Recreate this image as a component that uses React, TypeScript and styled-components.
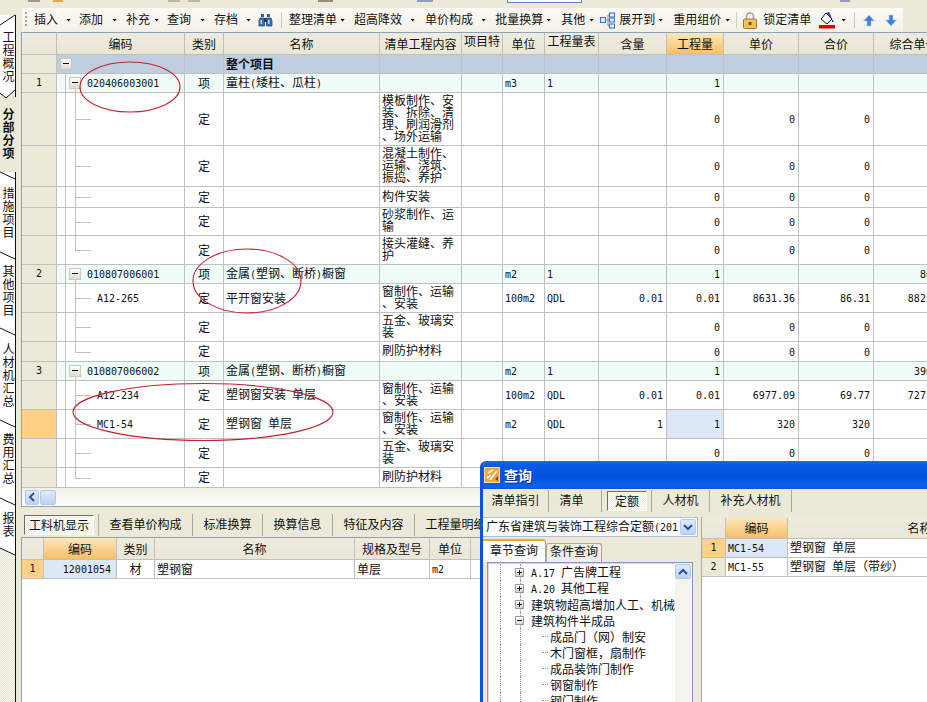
import React from 'react';
import styled, { createGlobalStyle } from 'styled-components';

const GlobalStyle = createGlobalStyle`
  html, body { margin: 0; padding: 0; background: #ece9d8; }
  body { font-family: "Noto Sans CJK SC", "Liberation Sans", sans-serif; font-size: 12px; color: #111; }
`;

const Page = styled.div`
  position: relative;
  width: 927px;
  height: 702px;
  overflow: hidden;
  display: flex;
  background: #ece9d8;
`;

/* ---------- left vertical tabs ---------- */
const Sidebar = styled.nav`
  width: 16px;
  flex: none;
  padding-top: 15px;
  display: flex;
  flex-direction: column;
`;
const SideTab = styled.div<{ $h: number; $pt: number; $active?: boolean }>`
  position: relative;
  box-sizing: border-box;
  height: ${p => p.$h}px;
  padding-top: ${p => p.$pt}px;
  background: ${p => (p.$active ? '#ece9d8' : '#fff')};
  border-right: 1px solid ${p => (p.$active ? '#ece9d8' : '#111')};
  writing-mode: vertical-rl;
  text-orientation: upright;
  font-size: 12px;
  line-height: 13px;
  letter-spacing: 1px;
  font-weight: ${p => (p.$active ? 700 : 400)};
`;
const Notch = styled.svg`
  position: absolute;
  left: 0;
  top: 0;
  width: 16px;
  height: 14px;
  overflow: visible;
`;
const SideTail = styled.div`
  flex: 1;
  position: relative;
  background: repeating-conic-gradient(#e6e3d2 0 25%, #f8f7f0 0 50%) 0 0 / 2px 2px;
  border-right: 1px solid #111;
`;

/* ---------- main column ---------- */
const Main = styled.main`
  flex: 1;
  min-width: 0;
  padding-left: 5px;
  display: flex;
  flex-direction: column;
`;
const TopStrip = styled.div`
  height: 8px;
  display: flex;
  align-items: flex-start;
  background: #ece9d8;
`;
const StripBit = styled.span<{ $ml: number; $w: number; $c: string; $box?: boolean }>`
  margin-left: ${p => p.$ml}px;
  width: ${p => p.$w}px;
  height: ${p => (p.$box ? 3 : 2)}px;
  box-sizing: border-box;
  background: ${p => p.$c};
  border: ${p => (p.$box ? '1px solid #5f86bd' : 'none')};
  border-top: none;
`;
const Toolbar = styled.div`
  height: 24px;
  width: 881px;
  margin-left: 1px;
  flex: none;
  display: flex;
  align-items: center;
  background: linear-gradient(#fbfaf6, #f3f1e6);
`;
const Grip = styled.span<{ $ml: number }>`
  margin-left: ${p => p.$ml}px;
  width: 2px;
  height: 16px;
  background: repeating-linear-gradient(#a9a794 0 2px, transparent 2px 4px);
`;
const ToolText = styled.span<{ $ml: number }>`
  margin-left: ${p => p.$ml}px;
  padding-bottom: 4px;
  font-size: 12px;
  white-space: nowrap;
`;
const Caret = styled.span<{ $ml: number }>`
  margin-left: ${p => p.$ml}px;
  width: 5px;
  height: 3px;
  flex: none;
  background: #111;
  clip-path: polygon(0 0, 100% 0, 50% 100%);
`;
const ToolSep = styled.span<{ $ml: number }>`
  margin-left: ${p => p.$ml}px;
  width: 1px;
  height: 16px;
  background: #cfccb8;
`;
const IconSlot = styled.svg<{ $ml: number }>`
  margin-left: ${p => p.$ml}px;
  flex: none;
`;

/* ---------- grids ---------- */
const UpperPanel = styled.section`
  height: 475px;
  box-sizing: border-box;
  flex: none;
  border-left: 1px solid #8ea3b4;
  border-top: 1px solid #8ea3b4;
  border-bottom: 1px solid #8ea3b4;
  overflow: hidden;
  display: flex;
  flex-direction: column;
  background: #fff;
`;
const TableClip = styled.div`
  height: 455px;
  flex: none;
  overflow: hidden;
`;
const Table = styled.table<{ $w: number }>`
  border-collapse: separate;
  border-spacing: 0;
  table-layout: fixed;
  width: ${p => p.$w}px;
`;
const Row = styled.tr<{ $h: number }>`
  height: ${p => p.$h}px;
`;
const Head = styled.th<{ $hot?: boolean; $raise?: boolean }>`
  box-sizing: border-box;
  padding: 0 0 ${p => (p.$raise ? 7 : 1)}px;
  font-weight: 400;
  font-size: 12px;
  line-height: 13px;
  white-space: nowrap;
  overflow: hidden;
  text-align: center;
  border-right: 1px solid #c0c0c0;
  border-bottom: 1px solid #c0c0c0;
  background: ${p => (p.$hot ? 'linear-gradient(#fde7bb, #f6bf66)' : 'linear-gradient(#efecdf, #e9e6d6)')};
`;
type Tone = 'group' | 'parent' | 'plain';
const toneBg: Record<Tone, string> = { group: '#bfcde0', parent: '#effcf7', plain: '#fff' };
const Cell = styled.td<{ $tone?: Tone; $align?: string; $pick?: boolean; $pl?: number; $pr?: number }>`
  box-sizing: border-box;
  position: relative;
  padding: 0 ${p => p.$pr ?? 3}px 2px ${p => p.$pl ?? 2}px;
  font-size: 12px;
  line-height: 13px;
  white-space: nowrap;
  overflow: hidden;
  text-align: ${p => p.$align ?? 'left'};
  border-right: 1px solid #c0c0c0;
  border-bottom: 1px solid #c0c0c0;
  background: ${p => (p.$pick ? '#dde8f6' : toneBg[p.$tone ?? 'plain'])};
`;
const Wrapped = styled(Cell)`
  white-space: normal;
  padding: 0 7px 3px 2px;
  line-height: 12px;
  word-break: break-all;
  line-break: anywhere;
`;
const RowHead = styled.td<{ $pick?: boolean }>`
  box-sizing: border-box;
  padding-bottom: 2px;
  text-align: center;
  font-size: 10px;
  line-height: 13px;
  font-family: "DejaVu Sans Mono", monospace;
  border-right: 1px solid #c0c0c0;
  border-bottom: 1px solid #c0c0c0;
  background: ${p => (p.$pick ? '#ffd085' : '#ece9d8')};
`;
const Mono = styled.span`
  font-family: "DejaVu Sans Mono", "Liberation Mono", monospace;
  font-size: 10px;
  line-height: 10px;
  white-space: pre;
`;
const Expander = styled.span<{ $left: number }>`
  position: absolute;
  left: ${p => p.$left}px;
  top: 50%;
  margin-top: -6px;
  width: 12px;
  height: 12px;
  box-sizing: border-box;
  border: 1px solid #c9c9c0;
  background: linear-gradient(#fdfdfb, #dedcd0);
  &::after {
    content: '';
    position: absolute;
    left: 2px;
    right: 2px;
    top: 4px;
    height: 1px;
    background: #111;
  }
`;
const Guide = styled.span<{ $left: number; $top?: string; $bottom?: string }>`
  position: absolute;
  left: ${p => p.$left}px;
  top: ${p => p.$top ?? '0'};
  bottom: ${p => p.$bottom ?? '0'};
  width: 1px;
  background: #c0c0c0;
`;
const Stub = styled.span`
  position: absolute;
  left: 18px;
  top: 50%;
  width: 16px;
  height: 1px;
  background: #c0c0c0;
`;

const ScrollBar = styled.div`
  flex: 1;
  display: flex;
  align-items: center;
  gap: 1px;
  padding-left: 3px;
  background: linear-gradient(#f3f1e7, #fdfdfb);
`;
const ScrollBtn = styled.span<{ $w: number }>`
  width: ${p => p.$w}px;
  height: 15px;
  box-sizing: border-box;
  display: flex;
  align-items: center;
  justify-content: center;
  border: 1px solid #b5c9ee;
  border-radius: 2px;
  background: linear-gradient(#dfe9fb, #bfd1f4);
`;

/* ---------- tab strips ---------- */
const LowerTabs = styled.div`
  height: 30px;
  box-sizing: border-box;
  flex: none;
  display: flex;
  align-items: center;
  padding: 6px 0 0 3px;
`;
const StripTab = styled.span<{ $w: number; $pr?: number }>`
  width: ${p => p.$w}px;
  height: 22px;
  box-sizing: border-box;
  flex: none;
  display: flex;
  align-items: center;
  justify-content: center;
  padding: 0 ${p => p.$pr ?? 0}px 3px 0;
  font-size: 12px;
  line-height: 13px;
  white-space: nowrap;
  border-right: 1px solid #aca899;
`;
const ActiveTab = styled.span<{ $w: number; $ml?: number }>`
  width: ${p => p.$w}px;
  height: 20px;
  margin-left: ${p => p.$ml ?? 0}px;
  margin-right: 4px;
  box-sizing: border-box;
  flex: none;
  display: flex;
  align-items: center;
  justify-content: center;
  padding-bottom: 2px;
  font-size: 12px;
  line-height: 13px;
  white-space: nowrap;
  border-top: 1px solid #716f64;
  border-left: 1px solid #716f64;
  border-right: 1px solid #fff;
  border-bottom: 1px solid #fff;
  background: repeating-conic-gradient(#f0eee2 0 25%, #fcfbf7 0 50%) 0 0 / 2px 2px;
`;
const TabSep = styled.span`
  width: 1px;
  height: 22px;
  flex: none;
  background: #aca899;
`;
const LowerPanel = styled.section`
  flex: 1;
  min-height: 0;
  border-left: 1px solid #8ea3b4;
  border-top: 1px solid #8ea3b4;
  overflow: hidden;
  background: #fff;
`;

/* ---------- floating query window ---------- */
const QueryWindow = styled.aside`
  position: absolute;
  left: 480px;
  top: 461px;
  right: 0;
  bottom: 0;
  box-sizing: border-box;
  border-left: 3px solid #0a55dc;
  border-top-left-radius: 6px;
  overflow: hidden;
  background: #ece9d8;
  display: flex;
  flex-direction: column;
`;
const TitleBar = styled.header`
  height: 28px;
  flex: none;
  margin-left: -3px;
  padding: 0 0 1px 4px;
  box-sizing: border-box;
  display: flex;
  align-items: center;
  gap: 4px;
  color: #fff;
  font-weight: 700;
  font-size: 14px;
  line-height: 14px;
  text-shadow: 1px 1px 0 #0a2f9c;
  background: linear-gradient(#0b6cf2 0, #0a5be6 15%, #0350dc 55%, #0a62ee 90%, #0a55d8 100%);
`;
const QueryTabs = styled.div`
  height: 24px;
  flex: none;
  display: flex;
  align-items: center;
`;
const QueryBody = styled.div`
  flex: 1;
  min-height: 0;
  padding-top: 4px;
  display: grid;
  grid-template-columns: 218px 1fr;
`;
const LeftPane = styled.div`
  display: flex;
  flex-direction: column;
  min-width: 0;
`;
const Combo = styled.div`
  height: 20px;
  flex: none;
  margin-left: -1px;
  width: 216px;
  box-sizing: border-box;
  display: flex;
  align-items: center;
  padding-left: 3px;
  border: 1px solid #aebfd6;
  background: #fff;
  overflow: hidden;
`;
const ComboText = styled.span`
  flex: 1;
  min-width: 0;
  padding-bottom: 2px;
  white-space: nowrap;
  overflow: hidden;
  font-size: 12px;
  line-height: 13px;
`;
const ComboBtn = styled(ScrollBtn)`
  flex: none;
  height: 16px;
  margin-right: 1px;
`;
const SubTabs = styled.div`
  height: 25px;
  flex: none;
  display: flex;
  align-items: flex-end;
  margin-left: -1px;
`;
const SubTab = styled.span<{ $active?: boolean; $w: number }>`
  width: ${p => p.$w}px;
  height: ${p => (p.$active ? 23 : 19)}px;
  box-sizing: border-box;
  display: flex;
  align-items: center;
  justify-content: center;
  padding-bottom: 5px;
  font-size: 12px;
  line-height: 13px;
  border: 1px solid #aca899;
  border-bottom: none;
  border-top: ${p => (p.$active ? '2px solid #f0a92e' : '1px solid #aca899')};
  border-radius: 3px 3px 0 0;
  background: ${p => (p.$active ? '#fdfdfa' : '#f1efe4')};
`;
const TreePanel = styled.div`
  flex: 1;
  min-height: 0;
  margin-left: 4px;
  width: 206px;
  box-sizing: border-box;
  border: 1px solid #7f9db9;
  border-bottom: none;
  box-shadow: inset 1px 1px 0 #dcd9c8;
  background: #fff;
  display: flex;
  overflow: hidden;
`;
const TreeList = styled.ul`
  flex: 1;
  min-width: 0;
  margin: 0;
  padding: 1px 0 0;
  list-style: none;
  overflow: hidden;
`;
const TreeRow = styled.li<{ $child?: boolean }>`
  position: relative;
  height: 16px;
  display: flex;
  align-items: center;
  padding-left: ${p => (p.$child ? 62 : 27)}px;
  font-size: 12px;
  line-height: 13px;
  white-space: nowrap;
  &::before {
    content: '';
    position: absolute;
    left: 12px;
    top: 0;
    bottom: 0;
    border-left: 1px dotted #999;
  }
`;
const TreeBox = styled.span`
  position: relative;
  width: 9px;
  height: 9px;
  margin-right: 7px;
  flex: none;
  box-sizing: border-box;
  border: 1px solid #9a9a9a;
  background: linear-gradient(#fff, #d8d6ca);
`;
const TreeGlyph = styled.svg`
  position: absolute;
  left: 0;
  top: 0;
`;
const ChildGuide = styled.span`
  position: absolute;
  left: 32px;
  top: 0;
  bottom: 0;
  border-left: 1px dotted #999;
`;
const ChildStub = styled.span`
  position: absolute;
  left: 54px;
  top: 8px;
  width: 6px;
  border-top: 1px dotted #999;
`;
const TreeTrack = styled.div`
  width: 17px;
  flex: none;
  padding-top: 1px;
  background: #f5f4ea;
`;
const RightPane = styled.div`
  border-left: 1px solid #aca899;
  overflow: hidden;
  background: #fff;
  padding-top: 1px;
  box-shadow: inset 0 1px 0 #ece9d8;
`;

/* ---------- hand-drawn annotations ---------- */
const Annotations = styled.svg`
  position: absolute;
  left: 0;
  top: 0;
  width: 927px;
  height: 702px;
  pointer-events: none;
`;

/* ---------- icons ---------- */
const Binoculars = ({ ml }: { ml: number }) => (
  <IconSlot $ml={ml} width="15" height="15" viewBox="0 0 15 15">
    <path d="M3 1h3v3H3zM9 1h3v3H9z" fill="#2f5f9e" />
    <path d="M2 5h4.500v8H1V8zM8.500 5H13l1 3v5H8.500z" fill="#3a72b8" stroke="#1e3f72" strokeWidth=".7" />
    <path d="M6 5h3v4H6z" fill="#1e3f72" />
    <path d="M2.500 7h1.500v4H2.500zM10 7h1.500v4H10z" fill="#bcd6f2" />
  </IconSlot>
);
const TreeIcon = ({ ml }: { ml: number }) => (
  <IconSlot $ml={ml} width="15" height="17" viewBox="0 0 15 17">
    <path d="M5 8h3M8 3v11M8 3h2M8 8h2M8 14h2" stroke="#6f8fc0" fill="none" />
    <rect x=".5" y="5.500" width="5" height="5" fill="#dfeafa" stroke="#3f6fb8" />
    <rect x="9.500" y="1" width="5" height="4" fill="#dfeafa" stroke="#3f6fb8" />
    <rect x="9.500" y="6" width="5" height="4" fill="#dfeafa" stroke="#3f6fb8" />
    <rect x="9.500" y="12" width="5" height="4" fill="#dfeafa" stroke="#3f6fb8" />
  </IconSlot>
);
const Lock = ({ ml }: { ml: number }) => (
  <IconSlot $ml={ml} width="14" height="17" viewBox="0 0 14 17">
    <path d="M3.500 7V4.500a3.500 3.500 0 0 1 7 0V7" fill="none" stroke="#a8a392" strokeWidth="1.600" />
    <rect x=".5" y="7" width="13" height="9.500" rx="1" fill="#f0c25a" stroke="#a8782a" />
    <rect x="5.500" y="10" width="3" height="3" fill="#6b4a12" />
  </IconSlot>
);
const Paint = ({ ml }: { ml: number }) => (
  <IconSlot $ml={ml} width="16" height="17" viewBox="0 0 16 17">
    <path d="M7 1l6 6-5 5-6-5z" fill="#fff" stroke="#111" />
    <path d="M7 1l3-1 3 6z" fill="#1e3f9e" />
    <path d="M13 7l2 3-2 0z" fill="#1e3f9e" />
    <rect x="0" y="13" width="16" height="3.500" fill="#e00000" />
  </IconSlot>
);
const Arrow = ({ ml, down }: { ml: number; down?: boolean }) => (
  <IconSlot $ml={ml} width="12" height="13" viewBox="0 0 12 13">
    <path
      d={down ? 'M4 1h4v5h3.500L6 12 .5 6H4z' : 'M4 12h4V7h3.500L6 1 .5 7H4z'}
      fill="#3f80d8"
      stroke="#b9d2f2"
      strokeWidth=".6"
    />
  </IconSlot>
);
const Chevron = ({ dir, color = '#2a4fa8' }: { dir: 'left' | 'up' | 'down'; color?: string }) => {
  const d = { left: 'M7 1L3 5l4 4', up: 'M1 7l4-4 4 4', down: 'M1 3l4 4 4-4' }[dir];
  return (
    <svg width="10" height="10" viewBox="0 0 10 10">
      <path d={d} fill="none" stroke={color} strokeWidth="2" />
    </svg>
  );
};
const WindowIcon = () => (
  <svg width="16" height="16" viewBox="0 0 16 16">
    <rect x=".5" y=".5" width="15" height="15" fill="#f0a63a" stroke="#f7dca8" />
    <path d="M3 11l4-3M4 6l5-3M6 13l7-9" stroke="#fff" strokeWidth="1.800" fill="none" />
    <path d="M11 12l3-3v5z" fill="#7a4a10" />
  </svg>
);

/* ---------- data ---------- */
const upperCols = [35, 128, 39, 156, 82, 41, 42, 54, 68, 57, 75, 75, 80];
const upperHeads = ['', '编码', '类别', '名称', '清单工程内容', '项目特', '单位', '工程量表', '含量', '工程量', '单价', '合价', '综合单价'];

type Kind = 'group' | 'parent' | 'child' | 'last';
interface RowData {
  h: number;
  kind: Kind;
  no?: string;
  code?: string;
  type?: string;
  name?: string;
  content?: string;
  unit?: string;
  expr?: string;
  rate?: string;
  qty?: string;
  price?: string;
  total?: string;
  sum?: string;
  selected?: boolean;
}
const WINDOW_TEXT = '窗制作、运输、安装';
const rows: RowData[] = [
  { h: 19, kind: 'group', name: '整个项目' },
  { h: 19, kind: 'parent', no: '1', code: '020406003001', type: '项', name: '童柱(矮柱、瓜柱)', unit: 'm3', expr: '1', qty: '1' },
  { h: 53, kind: 'child', type: '定', content: '模板制作、安装、拆除、清理、刷润滑剂、场外运输', qty: '0', price: '0', total: '0' },
  { h: 41, kind: 'child', type: '定', content: '混凝土制作、运输、浇筑、振捣、养护', qty: '0', price: '0', total: '0' },
  { h: 21, kind: 'child', type: '定', content: '构件安装', qty: '0', price: '0', total: '0' },
  { h: 28, kind: 'child', type: '定', content: '砂浆制作、运输', qty: '0', price: '0', total: '0' },
  { h: 29, kind: 'last', type: '定', content: '接头灌缝、养护', qty: '0', price: '0', total: '0' },
  { h: 19, kind: 'parent', no: '2', code: '010807006001', type: '项', name: '金属(塑钢、断桥)橱窗', unit: 'm2', expr: '1', qty: '1', sum: '86.31' },
  { h: 29, kind: 'child', code: 'A12-265', type: '定', name: '平开窗安装', content: WINDOW_TEXT, unit: '100m2', expr: 'QDL', rate: '0.01', qty: '0.01', price: '8631.36', total: '86.31', sum: '8821.36' },
  { h: 29, kind: 'child', type: '定', content: '五金、玻璃安装', qty: '0', price: '0', total: '0' },
  { h: 20, kind: 'last', type: '定', content: '刷防护材料', qty: '0', price: '0', total: '0' },
  { h: 19, kind: 'parent', no: '3', code: '010807006002', type: '项', name: '金属(塑钢、断桥)橱窗', unit: 'm2', expr: '1', qty: '1', sum: '390.85' },
  { h: 29, kind: 'child', code: 'A12-234', type: '定', name: '塑钢窗安装 单层', content: WINDOW_TEXT, unit: '100m2', expr: 'QDL', rate: '0.01', qty: '0.01', price: '6977.09', total: '69.77', sum: '7271.09' },
  { h: 29, kind: 'child', code: 'MC1-54', type: '定', name: '塑钢窗 单层', content: WINDOW_TEXT, unit: 'm2', expr: 'QDL', rate: '1', qty: '1', price: '320', total: '320', selected: true },
  { h: 29, kind: 'child', type: '定', content: '五金、玻璃安装', qty: '0', price: '0', total: '0' },
  { h: 20, kind: 'last', type: '定', content: '刷防护材料', qty: '0', price: '0', total: '0' },
];

const sideTabs = [
  { label: '工程概况', h: 82, pt: 16, first: true },
  { label: '分部分项', h: 75, pt: 11, active: true },
  { label: '措施项目', h: 80, pt: 15 },
  { label: '其他项目', h: 76, pt: 13 },
  { label: '人材机汇总', h: 92, pt: 15 },
  { label: '费用汇总', h: 78, pt: 13 },
  { label: '报表', h: 50, pt: 14 },
];

const lowerCols = [22, 73, 38, 200, 75, 41, 80];
const lowerHeads = ['', '编码', '类别', '名称', '规格及型号', '单位', '损耗率'];

/* Latin runs use the half-width mono face, as the original grid font does. */
const Mixed = ({ text }: { text?: string }) => (
  <>
    {(text ?? '').split(/([\x20-\x7e]+)/).map((part, i) =>
      /[\x20-\x7e]/.test(part) ? <Mono key={i}>{part}</Mono> : part,
    )}
  </>
);

const TreeCode = ({ r }: { r: RowData }) => {
  const tone: Tone = r.kind === 'group' ? 'group' : r.kind === 'parent' ? 'parent' : 'plain';
  if (r.kind === 'group') {
    return (
      <Cell $tone={tone}>
        <Expander $left={3} />
      </Cell>
    );
  }
  const parent = r.kind === 'parent';
  return (
    <Cell $tone={tone} $pl={parent ? 30 : 40}>
      <Guide $left={8} />
      {parent ? <Guide $left={18} $top="50%" /> : <Guide $left={18} $bottom={r.kind === 'last' ? '50%' : '0'} />}
      {parent ? <Expander $left={12} /> : <Stub />}
      {r.code && <Mono>{r.code}</Mono>}
    </Cell>
  );
};

const UpperRow = ({ r }: { r: RowData }) => {
  const tone: Tone = r.kind === 'group' ? 'group' : r.kind === 'parent' ? 'parent' : 'plain';
  return (
    <Row $h={r.h}>
      <RowHead $pick={r.selected}>{r.no}</RowHead>
      <TreeCode r={r} />
      <Cell $tone={tone} $align="center" $pl={3}>{r.type}</Cell>
      <Cell $tone={tone}>{r.kind === 'group' ? <b>{r.name}</b> : <Mixed text={r.name} />}</Cell>
      <Wrapped $tone={tone}>{r.content}</Wrapped>
      <Cell $tone={tone} />
      <Cell $tone={tone}><Mono>{r.unit}</Mono></Cell>
      <Cell $tone={tone}><Mono>{r.expr}</Mono></Cell>
      <Cell $tone={tone} $align="right"><Mono>{r.rate}</Mono></Cell>
      <Cell $tone={tone} $align="right" $pick={r.selected}><Mono>{r.qty}</Mono></Cell>
      <Cell $tone={tone} $align="right"><Mono>{r.price}</Mono></Cell>
      <Cell $tone={tone} $align="right"><Mono>{r.total}</Mono></Cell>
      <Cell $tone={tone} $align="right"><Mono>{r.sum}</Mono></Cell>
    </Row>
  );
};

const Plus = () => (
  <TreeGlyph width="7" height="7" viewBox="0 0 7 7">
    <path d="M1 3.500h5M3.500 1v5" stroke="#111" />
  </TreeGlyph>
);
const Minus = () => (
  <TreeGlyph width="7" height="7" viewBox="0 0 7 7">
    <path d="M1 3.500h5" stroke="#111" />
  </TreeGlyph>
);

export default function App() {
  return (
    <Page>
      <GlobalStyle />
      <Sidebar>
        {sideTabs.map((t, i) => (
          <SideTab key={t.label} $h={t.h} $pt={t.pt} $active={t.active}>
            {t.label}
            {t.first && (
              <Notch viewBox="0 0 16 14">
                <path d="M0 10L15 0" stroke="#111" fill="none" />
              </Notch>
            )}
            {!t.first && !t.active && (
              <Notch viewBox="0 0 16 14">
                <path d="M0 0L15 7" stroke="#111" fill="none" />
              </Notch>
            )}
            {i === 1 && (
              <Notch viewBox="0 0 16 14">
                <path d="M0 -4L6 1L15 -7V0H0z" fill="#ece9d8" />
                <path d="M0 -4L6 1L15 -7" stroke="#111" fill="none" />
              </Notch>
            )}
          </SideTab>
        ))}
        <SideTail>
          <Notch viewBox="0 0 16 14">
            <path d="M0 0L15 7V0z" fill="#fff" />
            <path d="M0 0L15 7" stroke="#111" fill="none" />
          </Notch>
        </SideTail>
      </Sidebar>

      <Main>
        <TopStrip>
          <StripBit $ml={7} $w={12} $c="#9c9a8c" />
          <StripBit $ml={13} $w={10} $c="#e8a548" />
          <StripBit $ml={105} $w={12} $c="#b9b7a8" />
          <StripBit $ml={8} $w={12} $c="#b9b7a8" />
          <StripBit $ml={118} $w={15} $c="#8f8d80" />
          <StripBit $ml={84} $w={16} $c="#8d9dba" />
          <StripBit $ml={74} $w={75} $c="#fbfaf5" $box />
          <StripBit $ml={258} $w={10} $c="#8d9dba" />
        </TopStrip>
        <Toolbar>
          <Grip $ml={3} />
          <ToolText $ml={7}>插入</ToolText><Caret $ml={8} />
          <ToolText $ml={8}>添加</ToolText><Caret $ml={9} />
          <ToolText $ml={9}>补充</ToolText><Caret $ml={4} />
          <ToolText $ml={8}>查询</ToolText><Caret $ml={9} />
          <ToolText $ml={9}>存档</ToolText><Caret $ml={8} />
          <Binoculars ml={7} />
          <ToolSep $ml={8} />
          <ToolText $ml={7}>整理清单</ToolText><Caret $ml={3} />
          <ToolText $ml={9}>超高降效</ToolText><Caret $ml={8} />
          <ToolText $ml={10}>单价构成</ToolText><Caret $ml={8} />
          <ToolText $ml={9}>批量换算</ToolText><Caret $ml={3} />
          <ToolText $ml={10}>其他</ToolText><Caret $ml={4} />
          <TreeIcon ml={6} />
          <ToolText $ml={4}>展开到</ToolText><Caret $ml={3} />
          <ToolText $ml={10}>重用组价</ToolText><Caret $ml={4} />
          <ToolSep $ml={6} />
          <Lock ml={6} />
          <ToolText $ml={6}>锁定清单</ToolText>
          <Paint ml={8} /><Caret $ml={6} />
          <ToolSep $ml={8} />
          <Arrow ml={8} />
          <Arrow ml={10} down />
        </Toolbar>

        <UpperPanel>
          <TableClip>
            <Table $w={932}>
              <colgroup>
                {upperCols.map((w, i) => <col key={i} width={w} />)}
              </colgroup>
              <tbody>
                <Row $h={22}>
                  {upperHeads.map((h, i) => (
                    <Head key={i} $hot={h === '工程量'} $raise={h === '项目特' || h === '工程量表'}>{h}</Head>
                  ))}
                </Row>
                {rows.map((r, i) => <UpperRow key={i} r={r} />)}
              </tbody>
            </Table>
          </TableClip>
          <ScrollBar>
            <ScrollBtn $w={14}><Chevron dir="left" /></ScrollBtn>
            <ScrollBtn $w={16} />
          </ScrollBar>
        </UpperPanel>

        <LowerTabs>
          <ActiveTab $w={70}>工料机显示</ActiveTab>
          <TabSep />
          <StripTab $w={94}>查看单价构成</StripTab>
          <StripTab $w={70}>标准换算</StripTab>
          <StripTab $w={70}>换算信息</StripTab>
          <StripTab $w={82}>特征及内容</StripTab>
          <StripTab $w={82}>工程量明细</StripTab>
        </LowerTabs>

        <LowerPanel>
          <Table $w={529}>
            <colgroup>
              {lowerCols.map((w, i) => <col key={i} width={w} />)}
            </colgroup>
            <tbody>
              <Row $h={22}>
                {lowerHeads.map((h, i) => <Head key={i} $hot={h === '编码'}>{h}</Head>)}
              </Row>
              <Row $h={19}>
                <RowHead $pick>1</RowHead>
                <Cell $pick $align="right" $pr={5}><Mono>12001054</Mono></Cell>
                <Cell $align="center" $pl={3}>材</Cell>
                <Cell>塑钢窗</Cell>
                <Cell>单层</Cell>
                <Cell><Mono>m2</Mono></Cell>
                <Cell />
              </Row>
            </tbody>
          </Table>
        </LowerPanel>
      </Main>

      <Annotations viewBox="0 0 927 702">
        <g fill="none" stroke="#c4202c" strokeWidth="1.100">
          <ellipse cx="130" cy="87" rx="50" ry="25" />
          <ellipse cx="247" cy="281" rx="54" ry="32" />
          <ellipse cx="203" cy="412" rx="130" ry="28.500" />
        </g>
      </Annotations>

      <QueryWindow>
        <TitleBar>
          <WindowIcon />
          <span>查询</span>
        </TitleBar>
        <QueryTabs>
          <StripTab $w={66}>清单指引</StripTab>
          <StripTab $w={53} $pr={7}>清单</StripTab>
          <ActiveTab $w={40} $ml={5}>定额</ActiveTab>
          <TabSep />
          <StripTab $w={58}>人材机</StripTab>
          <StripTab $w={82}>补充人材机</StripTab>
        </QueryTabs>
        <QueryBody>
          <LeftPane>
            <Combo>
              <ComboText>广东省建筑与装饰工程综合定额<Mono>(201</Mono></ComboText>
              <ComboBtn $w={16}><Chevron dir="down" /></ComboBtn>
            </Combo>
            <SubTabs>
              <SubTab $active $w={64}>章节查询</SubTab>
              <SubTab $w={56}>条件查询</SubTab>
            </SubTabs>
            <TreePanel>
              <TreeList>
                <TreeRow><ChildGuide /><TreeBox><Plus /></TreeBox><span><Mixed text="A.17 " />广告牌工程</span></TreeRow>
                <TreeRow><ChildGuide /><TreeBox><Plus /></TreeBox><span><Mixed text="A.20 " />其他工程</span></TreeRow>
                <TreeRow><ChildGuide /><TreeBox><Plus /></TreeBox><span>建筑物超高增加人工、机械</span></TreeRow>
                <TreeRow><ChildGuide /><TreeBox><Minus /></TreeBox><span>建筑构件半成品</span></TreeRow>
                {['成品门（网）制安', '木门窗框，扇制作', '成品装饰门制作', '钢窗制作', '钢门制作'].map(t => (
                  <TreeRow key={t} $child><ChildGuide /><ChildStub />{t}</TreeRow>
                ))}
              </TreeList>
              <TreeTrack>
                <ScrollBtn $w={16}><Chevron dir="up" /></ScrollBtn>
              </TreeTrack>
            </TreePanel>
          </LeftPane>
          <RightPane>
            <Table $w={350}>
              <colgroup>
                <col width={24} />
                <col width={62} />
                <col width={264} />
              </colgroup>
              <tbody>
                <Row $h={21}>
                  <Head />
                  <Head $hot>编码</Head>
                  <Head>名称</Head>
                </Row>
                <Row $h={19}>
                  <RowHead $pick>1</RowHead>
                  <Cell $pick><Mono>MC1-54</Mono></Cell>
                  <Cell><Mixed text="塑钢窗 单层" /></Cell>
                </Row>
                <Row $h={19}>
                  <RowHead>2</RowHead>
                  <Cell><Mono>MC1-55</Mono></Cell>
                  <Cell><Mixed text="塑钢窗 单层" />（带纱）</Cell>
                </Row>
              </tbody>
            </Table>
          </RightPane>
        </QueryBody>
      </QueryWindow>
    </Page>
  );
}
